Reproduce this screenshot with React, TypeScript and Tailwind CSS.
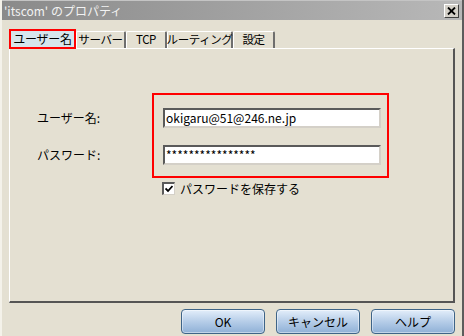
const font = { fontFamily: '"Noto Sans CJK JP", "Liberation Sans", sans-serif' };

function Tab({ label, width, active }: { label: string; width: string; active?: boolean }) {
  if (active) {
    return (
      <div
        className={`${width} h-[20px] flex items-center justify-center bg-[#d6e5ec] border-2 border-[#ff0000] text-[12px] leading-none whitespace-nowrap tracking-[-0.3px] text-black relative z-10 -mb-[1px]`}
      >
        {label}
      </div>
    );
  }
  return (
    <div
      className={`${width} h-[17px] flex items-center justify-center border-t border-l border-white border-r-2 border-r-[#6e6e6e] rounded-t-[2px] text-[11.5px] leading-none whitespace-nowrap tracking-[-0.4px] text-black`}
    >
      {label}
    </div>
  );
}

function Field({ value }: { value: string }) {
  return (
    <div className="w-[218px] h-[20px] bg-white border-t-2 border-l-2 border-t-[#5a5a5a] border-l-[#5a5a5a] border-b-2 border-r-2 border-b-[#d4d0c8] border-r-[#d4d0c8] flex items-center px-[1px] text-[12px] leading-none text-black">
      {value}
    </div>
  );
}

function XpButton({ label }: { label: string }) {
  return (
    <button className="w-[84px] h-[25px] rounded-[4px] border border-[#3e6488] bg-gradient-to-b from-[#e3eefa] via-[#b6cde8] to-[#8fb0d6] shadow-[inset_0_0_0_1px_rgba(255,255,255,0.45)] text-[12px] leading-none text-black">
      {label}
    </button>
  );
}

export default function App() {
  return (
    <div
      className="w-[464px] h-[336px] bg-[#e4e0d2] flex flex-col border-l-2 border-l-[#f4f2ea] border-r-2 border-r-[#5c5c5c] overflow-hidden"
      style={font}
    >
      {/* title bar */}
      <div className="h-[20px] shrink-0 flex items-center justify-between pl-[2px] pr-[3px] bg-gradient-to-r from-[#8a8a8a] to-[#b8b8b8] border-t border-[#c4c4c4]">
        <span className="text-[12px] leading-none text-[#f2f2f2]">'itscom' のプロパティ</span>
        <div className="w-[15px] h-[14px] bg-[#d4d0c8] border-t border-l border-white border-b border-r border-b-[#404040] border-r-[#404040] flex items-center justify-center">
          <svg width="9" height="8" viewBox="0 0 9 8">
            <path d="M1 0.5 L8 7.5 M8 0.5 L1 7.5" stroke="#000" strokeWidth="1.8" />
          </svg>
        </div>
      </div>

      <div className="pl-[7px] pt-[9px] flex flex-col">
        {/* tabs */}
        <div className="flex items-end h-[19px]">
          <Tab label="ユーザー名" width="w-[67px]" active />
          <Tab label="サーバー" width="w-[50px]" />
          <Tab label="TCP" width="w-[41px]" />
          <Tab label="ルーティング" width="w-[66px]" />
          <Tab label="設定" width="w-[42px]" />
        </div>

        {/* panel */}
        <div className="w-[446px] h-[255px] border-t border-l border-white border-r-2 border-b-2 border-r-[#555] border-b-[#555] pl-[27px] pt-[44px] flex flex-col">
          <div className="flex">
            <div className="w-[115px] pt-[15px] flex flex-col gap-[17px]">
              <div className="h-[20px] flex items-center text-[12px] text-black">ユーザー名:</div>
              <div className="h-[20px] flex items-center text-[12px] text-black">パスワード:</div>
            </div>
            <div className="w-[237px] h-[85px] border-2 border-[#ff0000] pl-[9px] pt-[13px] flex flex-col gap-[17px]">
              <Field value="okigaru@51@246.ne.jp" />
              <Field value="****************" />
            </div>
          </div>

          <div className="ml-[125px] mt-[4px] flex items-center gap-[5px]">
            <div className="w-[13px] h-[13px] bg-white border-t-2 border-l-2 border-t-[#5a5a5a] border-l-[#5a5a5a] border-b border-r border-b-[#d4d0c8] border-r-[#d4d0c8] flex items-center justify-center">
              <svg width="8" height="8" viewBox="0 0 8 8">
                <path d="M0.5 3.5 L3 6 L7.5 1" stroke="#000" strokeWidth="1.8" fill="none" />
              </svg>
            </div>
            <span className="text-[12px] leading-none text-black">パスワードを保存する</span>
          </div>
        </div>

        {/* buttons */}
        <div className="flex justify-end gap-[11px] pr-[7px] pt-[6px]">
          <XpButton label="OK" />
          <XpButton label="キャンセル" />
          <XpButton label="ヘルプ" />
        </div>
      </div>
    </div>
  );
}
